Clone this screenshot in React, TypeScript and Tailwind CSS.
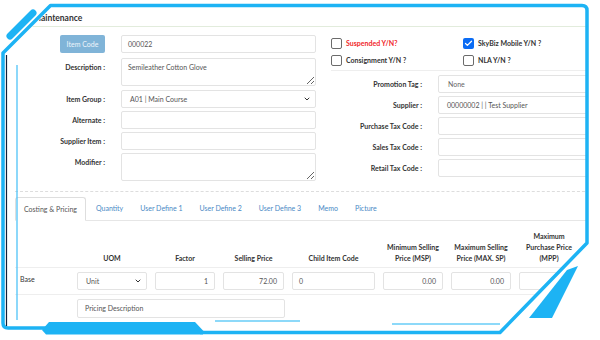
import { Check, ChevronDown } from 'lucide-react';
import type { ReactNode } from 'react';

const box =
  'h-[18px] rounded-[2px] border border-[#e3e3e3] bg-white text-[7px] text-[#555] outline-none';

function Label({ children, width, top }: { children: ReactNode; width: string; top?: boolean }) {
  return (
    <div className={`${width} shrink-0 text-right text-[7px] font-bold leading-[9px] text-[#333] ${top ? 'pt-[5px]' : ''}`}>
      {children}
    </div>
  );
}

function Select({ value, className }: { value: string; className: string }) {
  return (
    <div className={`${box} ${className} flex items-center justify-between pr-[4px]`}>
      <span>{value}</span>
      <ChevronDown size={8} strokeWidth={3} color="#333" />
    </div>
  );
}

function CheckBox({ label, checked, red }: { label: string; checked?: boolean; red?: boolean }) {
  return (
    <div className="flex h-[17px] items-center gap-[4px]">
      {checked ? (
        <div className="flex h-[11px] w-[11px] items-center justify-center rounded-[2px] bg-[#0b6cf4]">
          <Check size={9} strokeWidth={3.5} color="#fff" />
        </div>
      ) : (
        <div className="h-[11px] w-[11px] rounded-[2px] border border-[#6b6b6b] bg-white" />
      )}
      <span className={`text-[7px] font-bold ${red ? 'text-[#f0262a]' : 'text-[#333]'}`}>{label}</span>
    </div>
  );
}

function Frame() {
  const blue = '#1db3f4';
  return (
    <svg className="pointer-events-none absolute inset-0" width="600" height="340" viewBox="0 0 600 340">
      {/* white outside the frame */}
      <path
        fill="#fff"
        fillRule="evenodd"
        d="M0 0H600V340H0Z M5 54 L52 7 L584 7 Q586 7 586 9 L586 246 L502 331 L5 331 Z"
      />
      <path
        d="M46 328 L8 328 Q3 328 3 323 L3 53 L50.5 5.5 L582 5.5 Q587 5.5 587 10.5 L587 243 L500 332.5 L200 332.5"
        fill="none"
        stroke={blue}
        strokeWidth="3.5"
        strokeLinejoin="round"
      />
      <polygon points="42,330 49,322 195,322 203,330.5 203,334.5 46,334.5" fill={blue} />
      <line x1="6.5" y1="55" x2="6.5" y2="326" stroke="#10213a" strokeWidth="1.2" />
      <line x1="17" y1="65" x2="17" y2="320" stroke="#4fc3f7" strokeWidth="1.3" />
      <line x1="215" y1="321" x2="300" y2="321" stroke={blue} strokeWidth="1.2" />
      <line x1="392" y1="324" x2="500" y2="324" stroke={blue} strokeWidth="1.2" />
      <line x1="33" y1="13" x2="10" y2="36" stroke={blue} strokeWidth="7" strokeLinecap="round" />
      <polygon points="567,270 578,266 552,318 529,318" fill={blue} strokeLinejoin="round" />
    </svg>
  );
}

export default function App() {
  const tabs = ['Quantity', 'User Define 1', 'User Define 2', 'User Define 3', 'Memo', 'Picture'];
  const cols = 'grid grid-cols-[58px_78px_68px_69px_91px_68px_68px_68px]';

  return (
    <div className="relative h-[340px] w-[600px] overflow-hidden bg-white font-['Lato',sans-serif] text-[#333]">
      {/* title */}
      <div className="mt-[11px] h-[16px] border-b border-[#e2ecdc] pl-[33px] text-[8.5px] font-bold leading-[15px]">
        Maintenance
      </div>

      {/* form */}
      <div className="mt-[8px] flex pl-[20px]">
        <div className="flex w-[311px] shrink-0 flex-col">
          <div className="flex items-center">
            <div className="flex w-[85px] justify-end">
              <div className="flex h-[18px] w-[45px] items-center justify-center rounded-[2px] bg-[#80b4d8] text-[7px] text-[#eef5fb]">
                Item Code
              </div>
            </div>
            <div className={`${box} ml-[16px] flex w-[195px] items-center bg-[#eeeeee] px-[6px]`}>000022</div>
          </div>
          <div className="mt-[5px] flex items-start">
            <Label width="w-[85px]" top>Description :</Label>
            <textarea
              readOnly
              defaultValue="Semileather Cotton Glove"
              className={`${box} ml-[16px] h-[28px] w-[195px] resize-y px-[6px] py-[3px] leading-[10px]`}
            />
          </div>
          <div className="mt-[4px] flex items-center">
            <Label width="w-[85px]">Item Group :</Label>
            <Select value="A01 | Main Course" className="ml-[16px] w-[195px] pl-[8px]" />
          </div>
          <div className="mt-[3px] flex items-center">
            <Label width="w-[85px]">Alternate :</Label>
            <div className={`${box} ml-[16px] w-[195px]`} />
          </div>
          <div className="mt-[3px] flex items-center">
            <Label width="w-[85px]">Supplier Item :</Label>
            <div className={`${box} ml-[16px] w-[195px]`} />
          </div>
          <div className="mt-[3px] flex items-start">
            <Label width="w-[85px]" top>Modifier :</Label>
            <textarea readOnly className={`${box} ml-[16px] h-[28px] w-[195px] resize-y`} />
          </div>
        </div>

        <div className="flex flex-1 flex-col">
          <div className="grid grid-cols-[132px_1fr] border-b border-[#eeeeee] pb-[1px]">
            <CheckBox label="Suspended Y/N?" red />
            <CheckBox label="SkyBiz Mobile Y/N ?" checked />
            <CheckBox label="Consignment Y/N ?" />
            <CheckBox label="NLA Y/N ?" />
          </div>
          <div className="mt-[4px] flex flex-col gap-[3px]">
            <div className="flex items-center">
              <Label width="w-[91px]">Promotion Tag :</Label>
              <div className={`${box} ml-[16px] flex w-[195px] shrink-0 items-center pl-[9px] text-[#666]`}>None</div>
            </div>
            <div className="flex items-center">
              <Label width="w-[91px]">Supplier :</Label>
              <div className={`${box} ml-[16px] flex w-[195px] shrink-0 items-center pl-[8px]`}>
                00000002 | | Test Supplier
              </div>
            </div>
            {['Purchase Tax Code :', 'Sales Tax Code :', 'Retail Tax Code :'].map((l) => (
              <div key={l} className="flex items-center">
                <Label width="w-[91px]">{l}</Label>
                <div className={`${box} ml-[16px] w-[195px] shrink-0`} />
              </div>
            ))}
          </div>
        </div>
      </div>

      {/* lower part */}
      <div className="ml-[15px] mt-[10px] border-t border-dashed border-[#dddddd]">
        <div className="mt-[5px] flex h-[24px] items-end gap-[3px] border-b border-[#e6e6e6]">
          <div className="-mb-px flex h-[24px] items-center rounded-t-[3px] border border-b-white border-[#dedede] bg-white px-[8px] text-[7px] text-[#555]">
            Costing &amp; Pricing
          </div>
          {tabs.map((t) => (
            <div key={t} className="flex h-[23px] items-center px-[7px] text-[7px] text-[#4a89c5]">
              {t}
            </div>
          ))}
        </div>

        <div className={`${cols} h-[47px] items-end border-b border-[#eeeeee] pb-[3px] text-center text-[7px] font-bold leading-[11px]`}>
          <div />
          <div>UOM</div>
          <div>Factor</div>
          <div>Selling Price</div>
          <div>Child Item Code</div>
          <div>
            Minimum Selling
            <br />
            Price (MSP)
          </div>
          <div>
            Maximum Selling
            <br />
            Price (MAX. SP)
          </div>
          <div>
            Maximum
            <br />
            Purchase Price
            <br />
            (MPP)
          </div>
        </div>

        <div className={`${cols} border-b border-[#eeeeee] py-[4px] text-[7px]`}>
          <div className="pl-[5px] pt-[2px] leading-[11px]">Base</div>
          <div className="px-[4px]">
            <Select value="Unit" className="w-full pl-[8px]" />
          </div>
          <div className="px-[4px]">
            <div className={`${box} flex items-center justify-end bg-[#eeeeee] pr-[6px]`}>1</div>
          </div>
          <div className="px-[4px]">
            <div className={`${box} flex items-center justify-end pr-[6px]`}>72.00</div>
          </div>
          <div className="px-[4px]">
            <div className={`${box} flex items-center pl-[6px]`}>0</div>
          </div>
          <div className="px-[4px]">
            <div className={`${box} flex items-center justify-end pr-[6px]`}>0.00</div>
          </div>
          <div className="px-[4px]">
            <div className={`${box} flex items-center justify-end pr-[6px]`}>0.00</div>
          </div>
          <div className="px-[4px]">
            <div className={`${box} flex items-center justify-end pr-[6px]`}>0.00</div>
          </div>
        </div>

        <div className="mt-[4px] pl-[62px]">
          <div className={`${box} flex h-[19px] w-[208px] items-center pl-[7px] text-[#9a9a9a]`}>Pricing Description</div>
        </div>
      </div>

      <Frame />
    </div>
  );
}
